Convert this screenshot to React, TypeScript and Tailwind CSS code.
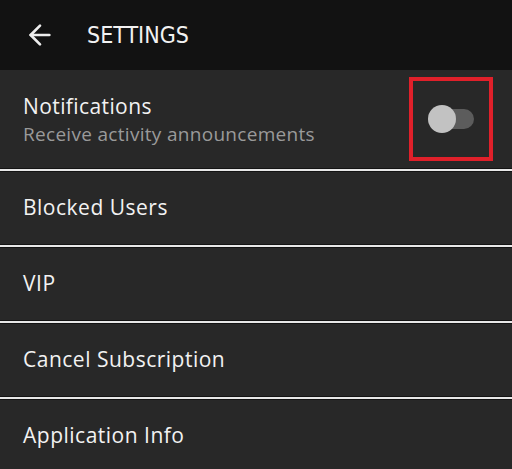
import { ArrowLeft } from "lucide-react";

const rows = ["Blocked Users", "VIP", "Cancel Subscription", "Application Info"];

function Separator() {
  return (
    <div className="flex flex-col">
      <div className="h-px bg-[#141414]" />
      <div className="h-[2px] bg-[#e8e8e8]" />
      <div className="h-px bg-[#141414]" />
    </div>
  );
}

export default function App() {
  return (
    <div className="w-[512px] h-[469px] overflow-hidden bg-[#282828] font-['Open_Sans',sans-serif] text-[#f2f2f2]">
      {/* Header */}
      <div className="h-[70px] bg-[#121212] flex items-center">
        <ArrowLeft size={32} strokeWidth={2} className="ml-[24px] text-[#ededed]" />
        <span className="ml-[31px] text-[23px] font-['DejaVu_Sans_Condensed','DejaVu_Sans',sans-serif]">
          SETTINGS
        </span>
      </div>

      {/* Notifications */}
      <div className="h-[98px] flex items-center pl-[23px] pr-5 pt-[3px]">
        <div className="flex-1">
          <p className="text-[21px] leading-[27px] tracking-[0.4px]">Notifications</p>
          <p className="text-[19px] leading-[28px] tracking-[0.3px] text-[#9a9a9a]">Receive activity announcements</p>
        </div>
        <div className="w-[84px] h-[84px] mr-[-1px] -mt-[3px] border-4 border-[#e0202a] flex items-center justify-center">
          <div className="relative w-[46px] h-[28px] flex items-center">
            <div className="absolute left-[10px] right-0 h-[20px] rounded-full bg-[#5c5c5c]" />
            <div className="relative w-[28px] h-[28px] rounded-full bg-[#c2c2c2]" />
          </div>
        </div>
      </div>

      {rows.map(label => (
        <div key={label}>
          <Separator />
          <div className="h-[72px] flex items-center pl-[23px] text-[21px] tracking-[0.5px]">{label}</div>
        </div>
      ))}
    </div>
  );
}
